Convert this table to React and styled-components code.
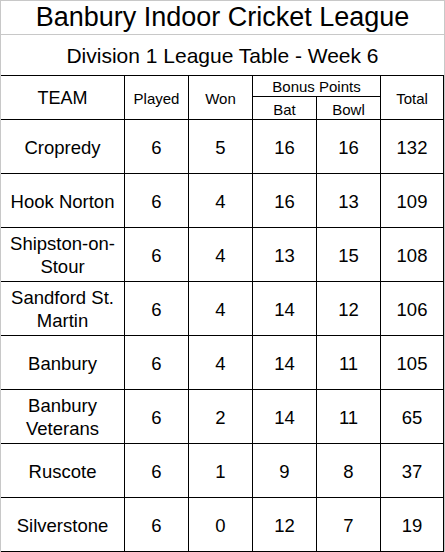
import React from "react";
import styled, { createGlobalStyle } from "styled-components";

const teams = [
  { name: "Cropredy", played: 6, won: 5, bat: 16, bowl: 16, total: 132 },
  { name: "Hook Norton", played: 6, won: 4, bat: 16, bowl: 13, total: 109 },
  { name: "Shipston-on-Stour", played: 6, won: 4, bat: 13, bowl: 15, total: 108 },
  { name: "Sandford St. Martin", played: 6, won: 4, bat: 14, bowl: 12, total: 106 },
  { name: "Banbury", played: 6, won: 4, bat: 14, bowl: 11, total: 105 },
  { name: "Banbury Veterans", played: 6, won: 2, bat: 14, bowl: 11, total: 65 },
  { name: "Ruscote", played: 6, won: 1, bat: 9, bowl: 8, total: 37 },
  { name: "Silverstone", played: 6, won: 0, bat: 12, bowl: 7, total: 19 },
];

const App = () => {
  return (
    <>
      <GlobalStyle />
      <Sheet>
        <Title>Banbury Indoor Cricket League</Title>
        <Subtitle>Division 1 League Table - Week 6</Subtitle>
        <Table>
          <HeadCell $row="1 / 3" $col="1" $size={18}>
            TEAM
          </HeadCell>
          <HeadCell $row="1 / 3" $col="2">
            Played
          </HeadCell>
          <HeadCell $row="1 / 3" $col="3">
            Won
          </HeadCell>
          <HeadCell $row="1" $col="4 / 6">
            Bonus Points
          </HeadCell>
          <HeadCell $row="1 / 3" $col="6">
            Total
          </HeadCell>
          <HeadCell $row="2" $col="4" $lift>
            Bat
          </HeadCell>
          <HeadCell $row="2" $col="5" $lift>
            Bowl
          </HeadCell>
          {teams.map((t) => (
            <React.Fragment key={t.name}>
              <TeamCell>{t.name}</TeamCell>
              <NumCell>{t.played}</NumCell>
              <NumCell>{t.won}</NumCell>
              <NumCell>{t.bat}</NumCell>
              <NumCell>{t.bowl}</NumCell>
              <NumCell>{t.total}</NumCell>
            </React.Fragment>
          ))}
        </Table>
      </Sheet>
    </>
  );
};

export default App;

const GlobalStyle = createGlobalStyle`
  html, body {
    margin: 0;
    padding: 0;
    background: #fff;
  }
  body {
    font-family: "Liberation Sans", Arial, sans-serif;
    color: #000;
  }
  * {
    box-sizing: border-box;
  }
`;

const Sheet = styled.div`
  width: 445px;
  height: 552px;
  border-top: 1px solid #c8c8c8;
  border-left: 1px solid #c8c8c8;
  border-right: 1px solid #c8c8c8;
  display: flex;
  flex-direction: column;
`;

const Title = styled.div`
  height: 34px;
  border-bottom: 1px solid #c8c8c8;
  display: flex;
  align-items: center;
  justify-content: center;
  font-size: 27px;
  padding-bottom: 1px;
`;

const Subtitle = styled.div`
  height: 40px;
  display: flex;
  align-items: center;
  justify-content: center;
  font-size: 21px;
  padding-top: 1px;
`;

const Table = styled.div`
  display: grid;
  grid-template-columns: 124px 64px 64px 64px 64px 63px;
  grid-template-rows: 21px 23px repeat(8, 54px);
  border-top: 1px solid #000;
`;

const HeadCell = styled.div`
  grid-row: ${(p) => p.$row};
  grid-column: ${(p) => p.$col};
  display: flex;
  align-items: center;
  justify-content: center;
  border-right: 1px solid #000;
  border-bottom: 1px solid #000;
  font-size: ${(p) => p.$size || 15}px;
  line-height: 1;
  padding-top: ${(p) => (p.$lift ? 2 : 1)}px;
`;

const NumCell = styled.div`
  display: flex;
  align-items: center;
  justify-content: center;
  border-right: 1px solid #000;
  border-bottom: 1px solid #000;
  font-size: 18.5px;
  padding-top: 3px;
`;

const TeamCell = styled(NumCell)`
  text-align: center;
  line-height: 1.22;
  padding: 3px 2px 0;
`;
